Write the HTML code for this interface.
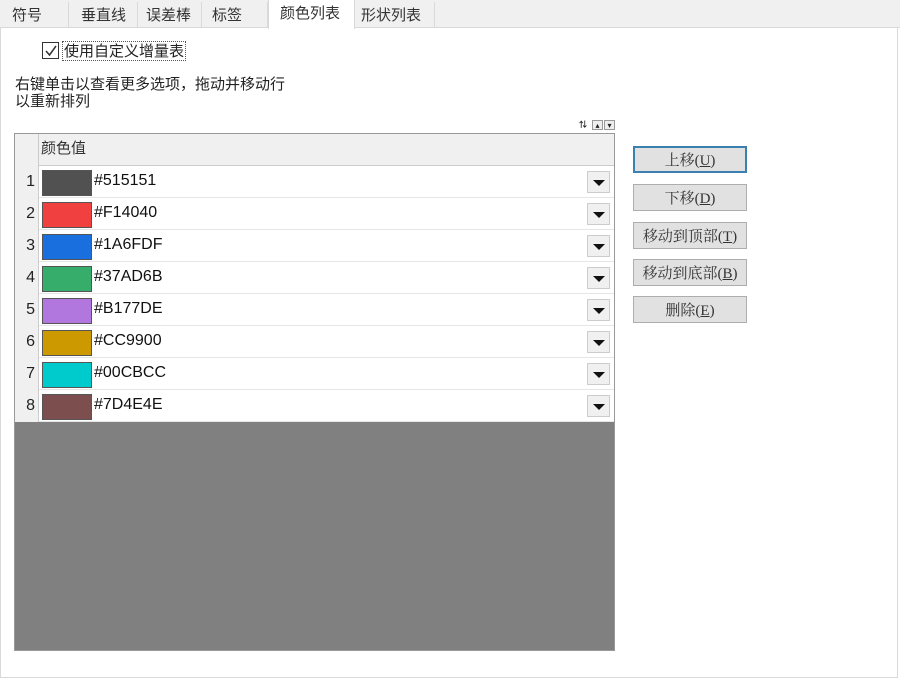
<!DOCTYPE html>
<html><head><meta charset="utf-8"><style>
*{box-sizing:border-box;margin:0;padding:0}
body{width:900px;height:679px;background:#fff;font-family:"Liberation Sans","Noto Sans CJK SC",sans-serif;font-size:15px;color:#222;position:relative;overflow:hidden}
.abs{position:absolute}
.tabbar{left:0;top:0;width:900px;height:28px;background:#f0f0f0;border-bottom:1px solid #d9d9d9}
.tab{position:absolute;top:2px;height:26px;line-height:27px;border-right:1px solid #d9d9d9;padding-left:12px;color:#333}
.panel{left:0;top:27px;width:898px;height:651px;border:1px solid #d9d9d9;border-top:none}
.grid{left:14px;top:133px;width:601px;height:518px;background:#808080;border:1px solid #999}
.hdr{position:absolute;left:0;top:0;width:599px;height:32px;background:#f0f0f0;border-bottom:1px solid #ccc}
.row{position:absolute;left:0;width:599px;height:32px;background:#fff;border-bottom:1px solid #e6e6e6}
.num{position:absolute;left:0;top:0;width:24px;height:32px;background:#f0f0f0;border-right:1px solid #ccc;text-align:right;padding-right:3px;line-height:32px;font-size:16px}
.sw{position:absolute;left:27px;top:4px;width:50px;height:26px;border:1px solid #555}
.hex{position:absolute;left:79px;top:0;line-height:30px;font-size:16px;color:#111}
.dd{position:absolute;left:572px;top:5px;width:23px;height:22px;background:#f0f0f0;border:1px solid #ccc}
.dd:after{content:"";position:absolute;left:5px;top:8px;border-left:6px solid transparent;border-right:6px solid transparent;border-top:6px solid #111}
.btn{position:absolute;left:633px;width:114px;height:27px;background:#e1e1e1;border:1px solid #adadad;text-align:center;line-height:29px;color:#333;font-family:"Liberation Serif","Noto Serif CJK SC",serif}
</style></head><body>
<div class="abs tabbar">
<div class="tab" style="left:0;width:69px">符号</div>
<div class="tab" style="left:69px;width:69px">垂直线</div>
<div class="tab" style="left:138px;width:64px;padding-left:8px">误差棒</div>
<div class="tab" style="left:202px;width:66px;padding-left:10px">标签</div>
<div class="tab" style="left:268px;top:0;height:29px;width:87px;background:#fff;border-left:1px solid #d9d9d9;padding-left:11px">颜色列表</div>
<div class="tab" style="left:355px;width:80px;padding-left:6px">形状列表</div>
</div>
<div class="abs panel"></div>
<div class="abs" style="left:42px;top:42px;width:17px;height:17px;border:1px solid #333"></div>
<svg class="abs" style="left:44px;top:44px" width="14" height="14"><path d="M2 7 L5.5 11 L12 2" stroke="#333" stroke-width="1.5" fill="none"/></svg>
<div class="abs" style="left:62px;top:41px;height:20px;line-height:19px;border:1px dotted #555;padding:0 1px">使用自定义增量表</div>
<div class="abs" style="left:15px;top:76px;line-height:17px">右键单击以查看更多选项，拖动并移动行<br>以重新排列</div>
<div class="abs" style="left:579px;top:120px;font-size:8px;line-height:10px;display:flex;gap:1px"><span style="width:12px;height:10px;font-weight:bold">⇅</span><span style="width:11px;height:10px;border:1px solid #999;background:#eee;text-align:center">▴</span><span style="width:11px;height:10px;border:1px solid #999;background:#eee;text-align:center">▾</span></div>
<div class="abs grid">
<div class="hdr"><div class="num" style="height:32px"></div><div style="position:absolute;left:26px;line-height:30px;color:#333">颜色值</div></div>
<div class="row" style="top:32px"><div class="num">1</div><div class="sw" style="background:#515151"></div><div class="hex">#515151</div><div class="dd"></div></div>
<div class="row" style="top:64px"><div class="num">2</div><div class="sw" style="background:#F14040"></div><div class="hex">#F14040</div><div class="dd"></div></div>
<div class="row" style="top:96px"><div class="num">3</div><div class="sw" style="background:#1A6FDF"></div><div class="hex">#1A6FDF</div><div class="dd"></div></div>
<div class="row" style="top:128px"><div class="num">4</div><div class="sw" style="background:#37AD6B"></div><div class="hex">#37AD6B</div><div class="dd"></div></div>
<div class="row" style="top:160px"><div class="num">5</div><div class="sw" style="background:#B177DE"></div><div class="hex">#B177DE</div><div class="dd"></div></div>
<div class="row" style="top:192px"><div class="num">6</div><div class="sw" style="background:#CC9900"></div><div class="hex">#CC9900</div><div class="dd"></div></div>
<div class="row" style="top:224px"><div class="num">7</div><div class="sw" style="background:#00CBCC"></div><div class="hex">#00CBCC</div><div class="dd"></div></div>
<div class="row" style="top:256px"><div class="num">8</div><div class="sw" style="background:#7D4E4E"></div><div class="hex">#7D4E4E</div><div class="dd"></div></div>
</div>
<div class="btn" style="top:146px;border:2px solid #3c7fb1;line-height:27px">上移(<u>U</u>)</div>
<div class="btn" style="top:184px">下移(<u>D</u>)</div>
<div class="btn" style="top:222px">移动到顶部(<u>T</u>)</div>
<div class="btn" style="top:259px">移动到底部(<u>B</u>)</div>
<div class="btn" style="top:296px">删除(<u>E</u>)</div>
</body></html>
